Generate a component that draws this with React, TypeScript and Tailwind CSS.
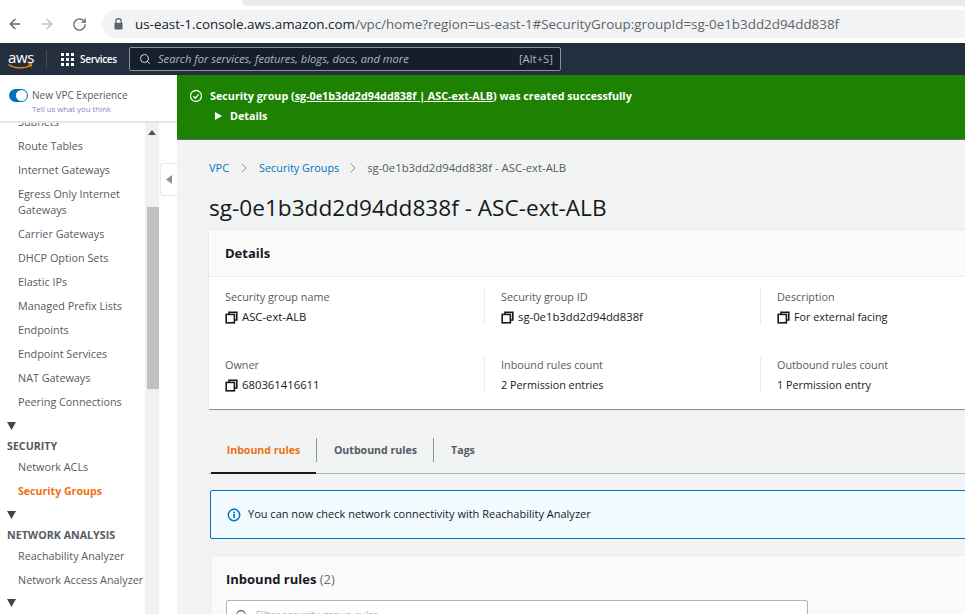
import { ArrowLeft, ArrowRight, RotateCw, Search, ChevronRight } from "lucide-react";

const font = "font-['Open_Sans',sans-serif]";

function CopyIcon() {
  return (
    <svg width="13" height="13" viewBox="0 0 13 13" fill="none" stroke="#16191f" strokeWidth="1.6" className="shrink-0">
      <path d="M4 3V1.2h7.8V9H10" />
      <rect x="1.2" y="3.4" width="8.2" height="8.4" />
    </svg>
  );
}

function TriangleDown() {
  return (
    <svg width="9" height="8" viewBox="0 0 9 8" className="block">
      <path d="M0 0h9L4.500 8z" fill="#414750" />
    </svg>
  );
}

function NavItem({ children, active }: { children: React.ReactNode; active?: boolean }) {
  return (
    <div className={`pl-[18px] h-6 flex items-center whitespace-nowrap ${active ? "pt-px text-[10.600px] text-[#ec7211] font-bold" : "text-[10.800px] text-[#545b64]"}`}>
      {children}
    </div>
  );
}

function NavGroup({ title }: { title: string }) {
  return (
    <div className="pl-[7px]">
      <div className="h-[23px] flex items-center"><TriangleDown /></div>
      <div className="h-[18px] flex items-center text-[10.700px] font-bold text-[#545b64] whitespace-nowrap">{title}</div>
    </div>
  );
}

function Field({ label, value, copy, narrow }: { label: string; value: string; copy?: boolean; narrow?: boolean }) {
  return (
    <div className="h-[36px]">
      <div className="text-[10.800px] leading-[16px] text-[#545b64] whitespace-nowrap">{label}</div>
      <div className={`mt-1 flex items-center gap-[4px] leading-[16px] text-[#16191f] whitespace-nowrap ${narrow ? "text-[10.800px]" : "text-[11.300px]"}`}>
        {copy && <CopyIcon />}
        {value}
      </div>
    </div>
  );
}

export default function App() {
  return (
    <div className={`w-[965px] h-[614px] overflow-hidden flex flex-col bg-white ${font}`}>
      {/* BROWSER BAR */}
      <div className="h-[43px] shrink-0 bg-white relative">
        <div className="absolute top-0 left-[242px] right-0 h-[6px] bg-[#e8eaed] rounded-bl-md" />
        <div className="flex items-center h-full pt-[5px] pl-[7px]">
          <ArrowLeft size={16} strokeWidth={2} className="text-[#5f6368]" />
          <ArrowRight size={16} strokeWidth={2} className="text-[#babcbe] ml-[16px]" />
          <RotateCw size={15} strokeWidth={2} className="text-[#5f6368] ml-[17px]" />
          <div className="ml-[15px] flex-1 h-[28px] bg-[#f1f3f4] rounded-l-full flex items-center pl-[12px]">
            <svg width="9" height="12" viewBox="0 0 9 12" className="shrink-0">
              <path d="M1.800 5V3.300a2.700 2.700 0 0 1 5.400 0V5" fill="none" stroke="#5f6368" strokeWidth="1.200" />
              <rect x="0.500" y="4.800" width="8" height="6.700" rx="0.800" fill="#5f6368" />
            </svg>
            <span className="ml-[12px] text-[13.400px] text-[#5f6368] whitespace-nowrap">
              <span className="text-[#202124]">us-east-1.console.aws.amazon.com</span>/vpc/home?region=us-east-1#SecurityGroup:groupId=sg-0e1b3dd2d94dd838f
            </span>
          </div>
        </div>
      </div>

      {/* AWS NAV */}
      <div className="h-[32px] shrink-0 bg-[#232f3e] flex items-center">
        <div className="w-[46px] pl-2 relative h-full shrink-0">
          <span className="block text-white text-[15px] leading-[15px] pt-[7px] font-normal tracking-[-0.300px]">aws</span>
          <svg width="25" height="7" viewBox="0 0 25 7" className="absolute left-[8px] top-[20px]">
            <path d="M0.500 1.500C7 6 17 6 23 2" fill="none" stroke="#ff9900" strokeWidth="1.300" />
            <path d="M20 1l4-.300-1.500 3.500" fill="none" stroke="#ff9900" strokeWidth="1" />
          </svg>
        </div>
        <div className="w-px h-[18px] bg-[#414d5c]" />
        <div className="ml-[14px] grid grid-cols-3 gap-[2px] w-[13px] shrink-0">
          {[0, 1, 2, 3, 4, 5, 6, 7, 8].map((i) => (
            <div key={i} className="w-[3px] h-[3px] bg-white" />
          ))}
        </div>
        <span className="ml-[6px] w-[36px] text-[10px] font-semibold text-white tracking-[-0.300px] whitespace-nowrap">Services</span>
        <div className="ml-[13px] w-[432px] h-[24px] bg-[#161e2d] border border-[#879596] rounded-[2px] flex items-center pl-[9px] pr-[7px]">
          <Search size={12} strokeWidth={2} className="text-[#d5dbdb]" />
          <span className="ml-[7px] text-[11.150px] italic text-[#aab7b8] whitespace-nowrap">Search for services, features, blogs, docs, and more</span>
          <span className="ml-auto text-[11.300px] text-[#aab7b8]">[Alt+S]</span>
        </div>
      </div>

      <div className="flex-1 flex min-h-0">
        {/* SIDEBAR */}
        <aside className="w-[177px] shrink-0 flex flex-col relative bg-white">
          <div className="h-[48px] shrink-0 border-b-2 border-[#e6e6e6] pl-[9px] pt-[14px] flex gap-[4px]">
            <div className="w-[19px] h-[13px] rounded-full bg-[#0073bb] relative shrink-0">
              <div className="absolute right-[1px] top-[1px] w-[11px] h-[11px] rounded-full bg-white" />
            </div>
            <div className="-mt-[1px]">
              <div className="text-[10px] leading-[14px] text-[#545b64] whitespace-nowrap">New VPC Experience</div>
              <div className="text-[7.800px] leading-[10px] mt-[2px] text-[#8a7fd0] whitespace-nowrap">Tell us what you think</div>
            </div>
          </div>
          <div className="flex-1 flex min-h-0 overflow-hidden">
            <nav className="w-[145px] shrink-0 -mt-[13px]">
              <NavItem>Subnets</NavItem>
              <NavItem>Route Tables</NavItem>
              <NavItem>Internet Gateways</NavItem>
              <div className="pl-[18px] pr-1 h-[40px] flex items-center text-[10.800px] leading-[16px] text-[#545b64]">Egress Only Internet Gateways</div>
              <NavItem>Carrier Gateways</NavItem>
              <NavItem>DHCP Option Sets</NavItem>
              <NavItem>Elastic IPs</NavItem>
              <NavItem>Managed Prefix Lists</NavItem>
              <NavItem>Endpoints</NavItem>
              <NavItem>Endpoint Services</NavItem>
              <NavItem>NAT Gateways</NavItem>
              <NavItem>Peering Connections</NavItem>
              <NavGroup title="SECURITY" />
              <NavItem>Network ACLs</NavItem>
              <NavItem active>Security Groups</NavItem>
              <NavGroup title="NETWORK ANALYSIS" />
              <NavItem>Reachability Analyzer</NavItem>
              <NavItem>Network Access Analyzer</NavItem>
              <div className="pl-[7px] pt-[7px]"><TriangleDown /></div>
            </nav>
            <div className="w-[14px] shrink-0 bg-[#f1f1f1] flex flex-col items-end">
              <svg width="8" height="5" viewBox="0 0 8 5" className="mt-[7px] mr-[3px] shrink-0">
                <path d="M0 5h8L4 0z" fill="#505050" />
              </svg>
              <div className="mt-[72px] w-[12px] h-[182px] bg-[#c1c1c1]" />
            </div>
          </div>
          {/* collapse tab */}
          <div className="absolute left-[160px] top-[88px] w-[17px] h-[33px] bg-white border border-r-0 border-[#e5e7e9] rounded-l-[4px] flex items-center justify-center">
            <svg width="6" height="9" viewBox="0 0 6 9">
              <path d="M6 0v9L0 4.500z" fill="#879596" />
            </svg>
          </div>
        </aside>

        {/* MAIN */}
        <main className="flex-1 min-w-0 bg-[#f2f3f3] overflow-hidden">
          {/* FLASH */}
          <div className="h-[65px] bg-[#1d8102] border-b border-[#5f6b6f] pl-[12px] pt-[13px] text-white text-[10.770px] font-bold">
            <div className="flex items-center h-4">
              <svg width="14" height="14" viewBox="0 0 14 14" fill="none" stroke="white" strokeWidth="1.300" className="shrink-0">
                <circle cx="7" cy="7" r="5.500" />
                <path d="M4.400 7.200l2 2 3.300-3.800" />
              </svg>
              <span className="ml-[7px] whitespace-nowrap">
                Security group (<span className="underline">sg-0e1b3dd2d94dd838f | ASC-ext-ALB</span>) was created successfully
              </span>
            </div>
            <div className="flex items-center h-4 mt-[4px] pl-[26px]">
              <svg width="7" height="8" viewBox="0 0 7 8" className="shrink-0">
                <path d="M0 0l7 4-7 4z" fill="white" />
              </svg>
              <span className="ml-[8px]">Details</span>
            </div>
          </div>

          <div className="w-[830px] pl-[32px]">
            {/* BREADCRUMB */}
            <div className="h-[20px] mt-[18px] flex items-center whitespace-nowrap">
              <span className="text-[11px] text-[#0073bb]">VPC</span>
              <ChevronRight size={16} strokeWidth={1.500} className="text-[#879596] ml-[7px] mr-[7px]" />
              <span className="text-[10.800px] text-[#0073bb]">Security Groups</span>
              <ChevronRight size={16} strokeWidth={1.500} className="text-[#879596] mx-[6px]" />
              <span className="text-[11.300px] text-[#545b64]">sg-0e1b3dd2d94dd838f - ASC-ext-ALB</span>
            </div>

            <h1 className="mt-[16px] text-[22.600px] leading-[28px] text-[#16191f] whitespace-nowrap">sg-0e1b3dd2d94dd838f - ASC-ext-ALB</h1>

            {/* DETAILS CARD */}
            <section className="mt-[8px] h-[180px] bg-white border-b border-[#879596] shadow-[0_0_1px_rgba(0,0,0,0.2)]">
              <div className="h-[47px] pt-[1px] bg-[#fafafa] border-b border-[#eaeded] pl-[16px] flex items-center text-[13px] font-bold text-[#16191f]">Details</div>
              <div className="grid grid-cols-[259px_276px_276px] pl-[16px] pt-[12px] gap-y-[32px]">
                <Field label="Security group name" value="ASC-ext-ALB" copy />
                <div className="border-l border-[#eaeded] pl-[16px]"><Field label="Security group ID" value="sg-0e1b3dd2d94dd838f" copy /></div>
                <div className="border-l border-[#eaeded] pl-[16px]"><Field label="Description" value="For external facing" copy narrow /></div>
                <Field label="Owner" value="680361416611" copy />
                <div className="border-l border-[#eaeded] pl-[16px]"><Field label="Inbound rules count" value="2 Permission entries" narrow /></div>
                <div className="border-l border-[#eaeded] pl-[16px]"><Field label="Outbound rules count" value="1 Permission entry" narrow /></div>
              </div>
            </section>

            {/* TABS */}
            <div className="mt-[20px] h-[44px] border-b border-[#aab7b8] flex text-[10.600px] font-bold">
              <div className="w-[105px] ml-[2px] h-[44px] pb-[1px] border-b-2 border-[#16191f] flex items-center justify-center text-[#ec7211]">
                Inbound rules
              </div>
              <div className="flex items-start pt-[8px]"><div className="w-px h-[24px] bg-[#879596]" /></div>
              <div className="w-[116px] pb-[1px] pl-[1px] flex items-center justify-center text-[#545b64]">Outbound rules</div>
              <div className="flex items-start pt-[8px]"><div className="w-px h-[24px] bg-[#879596]" /></div>
              <div className="w-[58px] pb-[1px] flex items-center justify-center text-[#545b64]">Tags</div>
            </div>

            {/* INFO */}
            <div className="ml-[1px] mt-[16px] h-[49px] bg-[#f1faff] border border-[#0073bb] rounded-[2px] flex items-center pl-[16px] text-[11px] text-[#16191f]">
              <svg width="14" height="14" viewBox="0 0 14 14" className="shrink-0">
                <circle cx="7" cy="7" r="5.700" fill="none" stroke="#0073bb" strokeWidth="1.500" />
                <rect x="6.200" y="6" width="1.700" height="4" fill="#0073bb" />
                <rect x="6.200" y="3.700" width="1.700" height="1.600" fill="#0073bb" />
              </svg>
              <span className="ml-[7px] whitespace-nowrap">You can now check network connectivity with Reachability Analyzer</span>
            </div>

            {/* RULES CARD */}
            <section className="mt-[16px] ml-[1px] h-[80px] bg-[#fafafa] border-t border-l border-[#eaeded] pl-[15px] pt-[13px]">
              <div className="text-[13px] leading-[20px] font-bold text-[#16191f]">
                Inbound rules <span className="font-normal text-[#687078]">(2)</span>
              </div>
              <div className="mt-[11px] w-[582px] h-[30px] bg-white border border-[#aab7b8] rounded-[2px] flex items-center pl-[8px]">
                <Search size={13} strokeWidth={2} className="text-[#545b64]" />
                <span className="ml-[7px] text-[11px] italic text-[#aab7b8]">Filter security group rules</span>
              </div>
            </section>
          </div>
        </main>
      </div>
    </div>
  );
}
